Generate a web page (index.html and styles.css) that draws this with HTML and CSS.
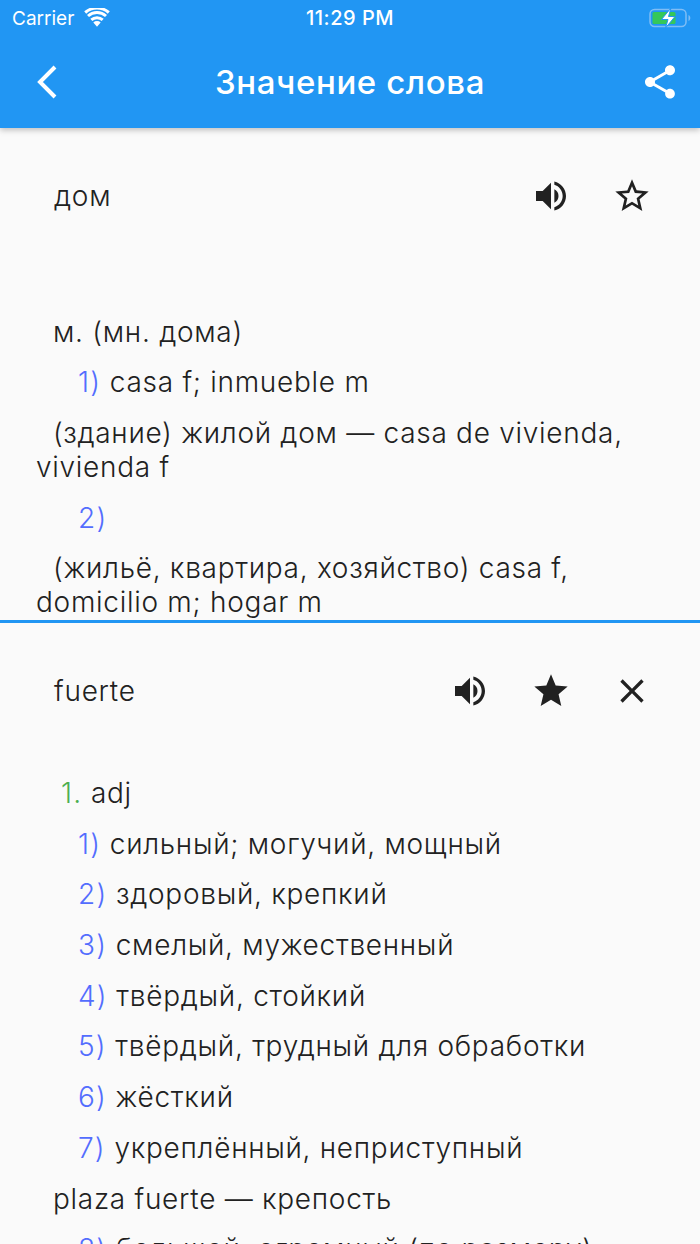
FILE: index.html
```html
<!DOCTYPE html>
<html lang="ru">
<head>
<meta charset="utf-8">
<title>Значение слова</title>
<link rel="stylesheet" href="styles.css">
</head>
<body>
<div class="app">
  <header class="appbar">
    <div class="status">
      <div class="status-left">
        <span>Carrier</span>
        <svg class="wifi" width="26" height="20" viewBox="0 0 26 20"><path d="M13 18.800 9.300 14.400a5.400 5.400 0 0 1 7.400 0Z" fill="#fff"/><path d="M7.300 11.900a8.600 8.600 0 0 1 11.400 0M4 8a13.500 13.500 0 0 1 18 0M1.200 4.500a18 18 0 0 1 23.600 0" fill="none" stroke="#fff" stroke-width="3"/></svg>
      </div>
      <span class="clock">11:29 PM</span>
      <svg class="battery" width="42" height="20" viewBox="0 0 42 20"><rect x="1" y="1.500" width="36" height="17" rx="4.500" fill="none" stroke="#7fbdf5" stroke-width="1.500"/><path d="M39.500 7v6c1.200-.5 1.800-1.700 1.800-3s-.6-2.500-1.800-3Z" fill="#7fbdf5"/><rect x="3.500" y="4" width="23" height="12" rx="1.500" fill="#35c759"/><path d="M22 0 12.500 11.500h6.500L16.500 20 26 8.500h-6.500Z" fill="#fff" stroke="#2196f3"/></svg>
    </div>
    <div class="toolbar">
      <svg class="back" width="24" height="36" viewBox="0 0 24 36"><path d="M20 3 5 18l15 15" fill="none" stroke="#fff" stroke-width="4"/></svg>
      <h1 class="title">Значение слова</h1>
      <svg class="share" width="40" height="40" viewBox="0 0 24 24"><path d="M18 16.080c-.76 0-1.440.3-1.960.77L8.910 12.700c.05-.23.090-.46.090-.7s-.04-.47-.09-.7l7.050-4.110c.54.5 1.250.81 2.040.81 1.660 0 3-1.340 3-3s-1.340-3-3-3-3 1.340-3 3c0 .24.040.47.090.7L8.040 9.810C7.500 9.310 6.790 9 6 9c-1.660 0-3 1.340-3 3s1.340 3 3 3c.79 0 1.500-.31 2.040-.81l7.120 4.160c-.05.21-.08.43-.08.65 0 1.610 1.310 2.920 2.920 2.920s2.920-1.310 2.920-2.920-1.310-2.920-2.920-2.920Z" fill="#fff"/></svg>
    </div>
  </header>

  <section class="pane pane-top">
    <div class="word-row">
      <span class="word">дом</span>
      <div class="actions">
        <svg class="icon" viewBox="0 0 24 24"><path d="M3 9v6h4l5 5V4L7 9H3Zm13.500 3A4.500 4.500 0 0 0 14 7.970v8.050A4.470 4.470 0 0 0 16.500 12ZM14 3.230v2.060c2.890.86 5 3.540 5 6.710s-2.110 5.850-5 6.710v2.060c4.010-.91 7-4.490 7-8.770s-2.990-7.860-7-8.770Z"/></svg>
        <svg class="icon" viewBox="0 0 24 24"><path d="m22 9.240-7.190-.62L12 2 9.190 8.630 2 9.240l5.460 4.730L5.820 21 12 17.270 18.180 21l-1.630-7.030L22 9.240ZM12 15.400l-3.760 2.270 1-4.280-3.320-2.880 4.380-.38L12 6.100l1.710 4.040 4.380.38-3.320 2.880 1 4.280L12 15.400Z"/></svg>
      </div>
    </div>
    <div class="entry entry-top">
      <p class="line"><span class="ind-note">м. (мн. дома)</span></p>
      <p class="line"><span class="num">1)</span> casa f; inmueble m</p>
      <p class="para">(здание) жилой дом — casa de vivienda, vivienda f</p>
      <p class="line"><span class="num">2)</span></p>
      <p class="para">(жильё, квартира, хозяйство) casa f, domicilio m; hogar m</p>
    </div>
  </section>

  <div class="divider"></div>

  <section class="pane pane-bottom">
    <div class="word-row">
      <span class="word">fuerte</span>
      <div class="actions">
        <svg class="icon" viewBox="0 0 24 24"><path d="M3 9v6h4l5 5V4L7 9H3Zm13.500 3A4.500 4.500 0 0 0 14 7.970v8.050A4.470 4.470 0 0 0 16.500 12ZM14 3.230v2.060c2.890.86 5 3.540 5 6.710s-2.110 5.850-5 6.710v2.060c4.010-.91 7-4.490 7-8.770s-2.990-7.860-7-8.770Z"/></svg>
        <svg class="icon" viewBox="0 0 24 24"><path d="M12 17.270 18.180 21l-1.640-7.030L22 9.240l-7.190-.61L12 2 9.190 8.630 2 9.240l5.460 4.730L5.820 21 12 17.270Z"/></svg>
        <svg class="icon" viewBox="0 0 24 24"><path d="M19 6.410 17.590 5 12 10.590 6.410 5 5 6.410 10.590 12 5 17.590 6.410 19 12 13.410 17.590 19 19 17.590 13.410 12 19 6.410Z"/></svg>
      </div>
    </div>
    <div class="entry entry-bottom">
      <p class="line head"><span class="grp">1.</span> adj</p>
      <p class="line"><span class="num">1)</span> сильный; могучий, мощный</p>
      <p class="line"><span class="num">2)</span> здоровый, крепкий</p>
      <p class="line"><span class="num">3)</span> смелый, мужественный</p>
      <p class="line"><span class="num">4)</span> твёрдый, стойкий</p>
      <p class="line"><span class="num">5)</span> твёрдый, трудный для обработки</p>
      <p class="line"><span class="num">6)</span> жёсткий</p>
      <p class="line"><span class="num">7)</span> укреплённый, неприступный</p>
      <p class="line"><span class="ind-note">plaza fuerte — крепость</span></p>
      <p class="line"><span class="num">8)</span> большой, огромный (по размеру)</p>
    </div>
  </section>
</div>
</body>
</html>
```
FILE: styles.css
```css
* { box-sizing: border-box; margin: 0; padding: 0; }
html, body { width: 700px; height: 1244px; overflow: hidden; }
body { font-family: Inter, "Liberation Sans", sans-serif; background: #fafafa; color: #212121; }
.app { height: 1244px; display: flex; flex-direction: column; overflow: hidden; }
.appbar { height: 128px; flex: none; background: #2196f3; color: #fff; box-shadow: 0 2px 6px rgba(0,0,0,.25); position: relative; z-index: 1; }
.status { height: 36px; padding: 0 9px 0 12px; display: flex; align-items: center; justify-content: space-between; font-size: 19px; position: relative; }
.status-left { display: flex; align-items: center; gap: 10px; }
.clock { position: absolute; left: 0; right: 0; top: 4px; text-align: center; line-height: 28px; font-size: 20px; font-weight: 500; letter-spacing: .5px; }
.toolbar { height: 92px; display: flex; align-items: center; justify-content: space-between; padding: 0 20px 0 35px; position: relative; }
.title { position: absolute; left: 0; right: 0; text-align: center; font-size: 33px; font-weight: 500; letter-spacing: .6px; }
.pane { flex: none; overflow: hidden; }
.pane-top { height: 492px; }
.pane-bottom { flex: 1; }
.divider { height: 3px; flex: none; background: #2196f3; }
.word-row { display: flex; align-items: center; justify-content: space-between; height: 136px; padding: 0 48px 0 54px; }
.word { font-size: 28px; font-weight: 350; letter-spacing: .75px; }
.actions { display: flex; gap: 41px; }
.icon { width: 40px; height: 40px; fill: #212121; display: block; }
.entry { font-size: 28px; font-weight: 350; line-height: 34px; padding: 0 36px; letter-spacing: .72px; }
.entry-top { padding-top: 50.500px; }
.entry-bottom { padding-top: 17px; }
.line { height: 34px; margin-bottom: 16.700px; padding-left: 42px; white-space: nowrap; }
.line .ind-note { margin-left: -25px; }
.head { padding-left: 25px; }
.para { text-indent: 17px; margin-bottom: 16.700px; }
.num { color: #536dfe; letter-spacing: 1.200px; }
.grp { color: #4caf50; letter-spacing: 1.200px; }
```
